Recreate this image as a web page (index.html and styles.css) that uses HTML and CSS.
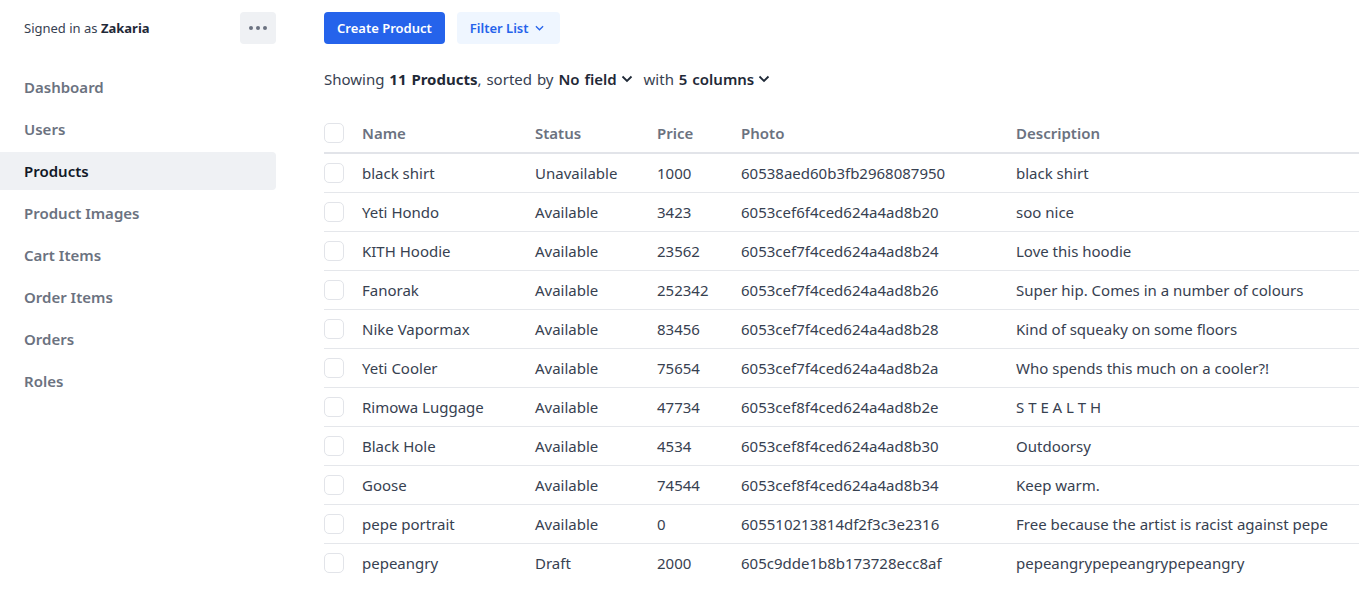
FILE: index.html
```html
<!DOCTYPE html>
<html>
<head>
<meta charset="utf-8">
<link rel="stylesheet" href="styles.css">
</head>
<body>
<div class="app">
  <aside class="sidebar">
    <div class="user">
      <span class="signed">Signed in as <b>Zakaria</b></span>
      <button class="dots"><span></span><span></span><span></span></button>
    </div>
    <nav class="nav">
      <a class="nav-item">Dashboard</a>
      <a class="nav-item">Users</a>
      <a class="nav-item active">Products</a>
      <a class="nav-item">Product Images</a>
      <a class="nav-item">Cart Items</a>
      <a class="nav-item">Order Items</a>
      <a class="nav-item">Orders</a>
      <a class="nav-item">Roles</a>
    </nav>
  </aside>
  <main class="main">
    <div class="toolbar">
      <button class="btn-primary">Create Product</button>
      <button class="btn-light">Filter List <svg class="chev-sm" viewBox="0 0 10 6"><path d="M1 1l4 4 4-4"/></svg></button>
    </div>
    <p class="summary">Showing <b>11 Products</b>, sorted by <span class="drop">No field<svg class="chev" viewBox="0 0 12 8"><path d="M1.5 1.5l4.5 4.5 4.5-4.5"/></svg></span> with <span class="drop">5 columns<svg class="chev" viewBox="0 0 12 8"><path d="M1.5 1.5l4.5 4.5 4.5-4.5"/></svg></span></p>
    <div class="table">
      <div class="row head">
        <div class="cell"><span class="cb"></span></div>
        <div class="cell">Name</div>
        <div class="cell">Status</div>
        <div class="cell">Price</div>
        <div class="cell">Photo</div>
        <div class="cell">Description</div>
      </div>
      <div class="row"><div class="cell"><span class="cb"></span></div><div class="cell">black shirt</div><div class="cell">Unavailable</div><div class="cell">1000</div><div class="cell">60538aed60b3fb2968087950</div><div class="cell">black shirt</div></div>
      <div class="row"><div class="cell"><span class="cb"></span></div><div class="cell">Yeti Hondo</div><div class="cell">Available</div><div class="cell">3423</div><div class="cell">6053cef6f4ced624a4ad8b20</div><div class="cell">soo nice</div></div>
      <div class="row"><div class="cell"><span class="cb"></span></div><div class="cell">KITH Hoodie</div><div class="cell">Available</div><div class="cell">23562</div><div class="cell">6053cef7f4ced624a4ad8b24</div><div class="cell">Love this hoodie</div></div>
      <div class="row"><div class="cell"><span class="cb"></span></div><div class="cell">Fanorak</div><div class="cell">Available</div><div class="cell">252342</div><div class="cell">6053cef7f4ced624a4ad8b26</div><div class="cell">Super hip. Comes in a number of colours</div></div>
      <div class="row"><div class="cell"><span class="cb"></span></div><div class="cell">Nike Vapormax</div><div class="cell">Available</div><div class="cell">83456</div><div class="cell">6053cef7f4ced624a4ad8b28</div><div class="cell">Kind of squeaky on some floors</div></div>
      <div class="row"><div class="cell"><span class="cb"></span></div><div class="cell">Yeti Cooler</div><div class="cell">Available</div><div class="cell">75654</div><div class="cell">6053cef7f4ced624a4ad8b2a</div><div class="cell">Who spends this much on a cooler?!</div></div>
      <div class="row"><div class="cell"><span class="cb"></span></div><div class="cell">Rimowa Luggage</div><div class="cell">Available</div><div class="cell">47734</div><div class="cell">6053cef8f4ced624a4ad8b2e</div><div class="cell">S T E A L T H</div></div>
      <div class="row"><div class="cell"><span class="cb"></span></div><div class="cell">Black Hole</div><div class="cell">Available</div><div class="cell">4534</div><div class="cell">6053cef8f4ced624a4ad8b30</div><div class="cell">Outdoorsy</div></div>
      <div class="row"><div class="cell"><span class="cb"></span></div><div class="cell">Goose</div><div class="cell">Available</div><div class="cell">74544</div><div class="cell">6053cef8f4ced624a4ad8b34</div><div class="cell">Keep warm.</div></div>
      <div class="row"><div class="cell"><span class="cb"></span></div><div class="cell">pepe portrait</div><div class="cell">Available</div><div class="cell">0</div><div class="cell">605510213814df2f3c3e2316</div><div class="cell">Free because the artist is racist against pepe</div></div>
      <div class="row last"><div class="cell"><span class="cb"></span></div><div class="cell">pepeangry</div><div class="cell">Draft</div><div class="cell">2000</div><div class="cell">605c9dde1b8b173728ecc8af</div><div class="cell">pepeangrypepeangrypepeangry</div></div>
    </div>
  </main>
</div>
</body>
</html>
```

FILE: styles.css
```css
* { box-sizing: border-box; }
html, body { margin: 0; padding: 0; background: #fff; }
body {
  font-family: "Noto Sans", "Open Sans", sans-serif;
  color: #374151;
  font-size: 15px;
}
.app { display: flex; align-items: flex-start; }

.sidebar { width: 276px; flex: none; }
.user {
  display: flex; align-items: center; justify-content: space-between;
  padding: 12px 0 0 24px; height: 44px;
}
.signed { font-size: 13px; color: #374151; }
.signed b { font-weight: 700; color: #1f2937; }
.dots {
  width: 36px; height: 32px; border: 0; border-radius: 4px;
  background: #eff1f4; display: flex; align-items: center; justify-content: center; gap: 3px; padding: 0;
}
.dots span { width: 4px; height: 4px; border-radius: 50%; background: #6b7280; }

.nav { display: flex; flex-direction: column; gap: 4px; margin-top: 24px; }
.nav-item {
  display: flex; align-items: center; height: 38px; padding-left: 24px;
  font-size: 15px; font-weight: 600; color: #6b7280; border-radius: 0 4px 4px 0;
}
.nav-item.active { background: #eff1f4; color: #111827; }

.main { flex: 1; padding-left: 48px; }
.toolbar { display: flex; gap: 12px; padding-top: 12px; }
.btn-primary, .btn-light {
  height: 32px; border: 0; border-radius: 4px; font-family: inherit;
  font-size: 13px; font-weight: 600; padding: 0 13px; display: flex; align-items: center;
}
.btn-primary { background: #2563eb; color: #fff; }
.btn-light { background: #eff6ff; color: #2563eb; gap: 6px; padding: 0 16px 0 13px; }
.chev-sm { width: 9px; height: 6px; fill: none; stroke: #2563eb; stroke-width: 1.4; }

.summary {
  margin: 23px 0 0; line-height: 24px; height: 24px;
  font-size: 15px; color: #374151; white-space: nowrap; word-spacing: 1px;
}
.summary b { font-weight: 700; color: #1f2937; }
.drop { font-weight: 600; color: #1f2937; }
.chev { width: 12px; height: 8px; margin-left: 4px; margin-right: 6px; fill: none; stroke: #1f2937; stroke-width: 1.8; vertical-align: 2px; }

.table { margin-top: 22px; }
.row {
  display: grid;
  grid-template-columns: 38px 173px 122px 84px 275px 1fr;
  height: 39px; border-bottom: 1px solid #e5e7eb; align-items: center;
}
.row.head { height: 41px; border-bottom: 2px solid #e2e4e9; font-weight: 600; color: #6b7280; }
.row.last { border-bottom-color: transparent; }
.cell { white-space: nowrap; display: flex; align-items: center; }
.cb {
  width: 20px; height: 20px; border: 1.5px solid #e2e4e9; border-radius: 5px; display: block;
}
```
